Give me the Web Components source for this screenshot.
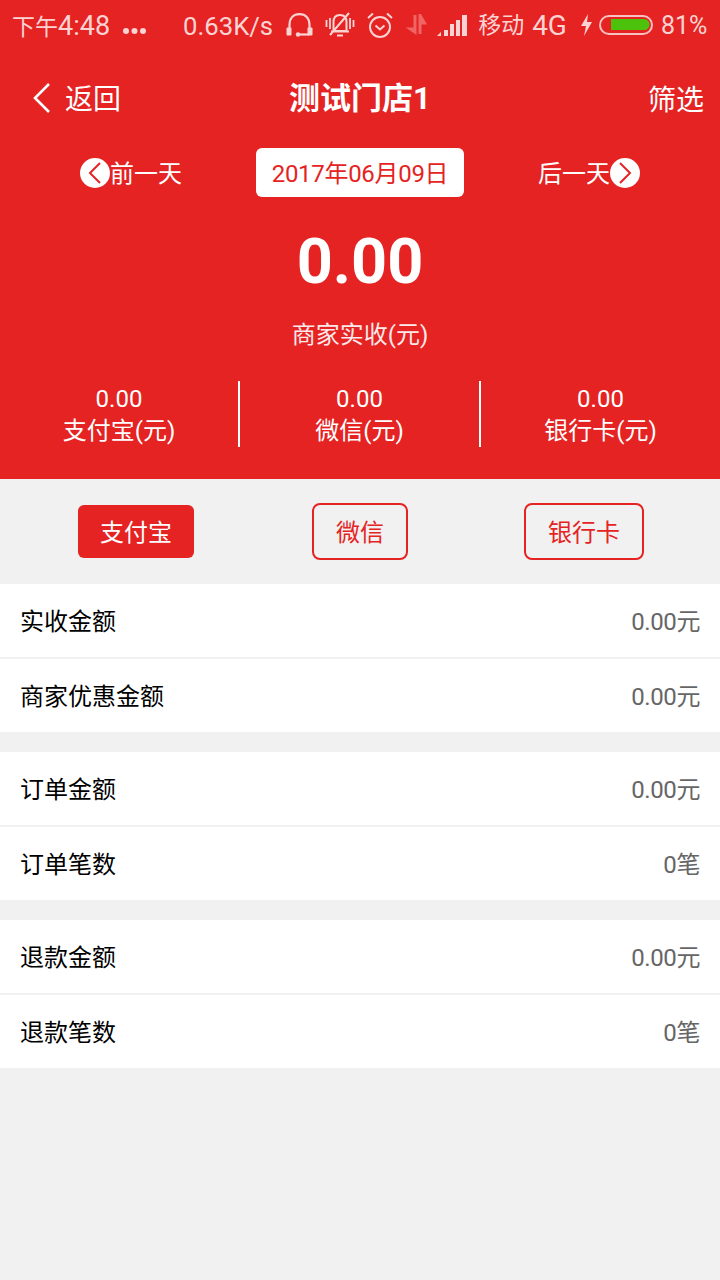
<!DOCTYPE html>
<html lang="zh">
<head>
<meta charset="utf-8">
<title>测试门店1</title>
<style>
  html, body { margin: 0; padding: 0; }
  body {
    width: 720px; height: 1280px; overflow: hidden;
    background: #f1f1f1;
    font-family: Roboto, "Noto Sans CJK SC", sans-serif;
  }
</style>
</head>
<body>
<store-report>
  <status-bar slot="top"></status-bar>
  <nav-bar slot="top" title="测试门店1"></nav-bar>
  <date-row slot="top" date="2017年06月09日"></date-row>
  <total-amount slot="top" value="0.00" label="商家实收(元)"></total-amount>
  <stat-row slot="top">
    <stat-cell value="0.00" label="支付宝(元)"></stat-cell>
    <stat-cell value="0.00" label="微信(元)"></stat-cell>
    <stat-cell value="0.00" label="银行卡(元)"></stat-cell>
  </stat-row>

  <pay-tabs>
    <pay-tab active>支付宝</pay-tab>
    <pay-tab style="margin-left:118px">微信</pay-tab>
    <pay-tab style="margin-left:116px">银行卡</pay-tab>
  </pay-tabs>

  <info-group>
    <info-row label="实收金额" value="0.00元"></info-row>
    <info-row label="商家优惠金额" value="0.00元"></info-row>
  </info-group>
  <info-group>
    <info-row label="订单金额" value="0.00元"></info-row>
    <info-row label="订单笔数" value="0笔"></info-row>
  </info-group>
  <info-group>
    <info-row label="退款金额" value="0.00元"></info-row>
    <info-row label="退款笔数" value="0笔"></info-row>
  </info-group>
</store-report>

<script>
// small helper, every element just sets its shadow html once
function shadowOf(el, html) {
  const shadow = el.attachShadow({ mode: 'open' });
  shadow.innerHTML = html;
  return shadow;
}

class StoreReport extends HTMLElement {
  constructor() {
    super();
    shadowOf(this, `
      <style>
        :host { display: block; }
        .head { background: #e52323; height: 479px; overflow: hidden; }
      </style>
      <div class="head"><slot name="top"></slot></div>
      <slot></slot>
    `);
  }
}

class StatusBar extends HTMLElement {
  constructor() {
    super();
    shadowOf(this, `
      <style>
        :host { display: flex; align-items: center; height: 50px; color: #fbd3d3; font-size: 26px; }
        .t { white-space: nowrap; line-height: 48px; padding-top: 2px; }
        .cn { font-size: 23px; }
        svg { display: block; flex: none; }
      </style>
      <span class="t" style="margin-left:12px;line-height:46px;padding-top:4px"><span class="cn">下午</span><span style="font-size:27px">4:48</span></span>
      <svg style="margin-left:12px;margin-top:12px" width="24" height="8" viewBox="0 0 24 8" fill="#fbd3d3"><circle cx="4" cy="4" r="3"/><circle cx="12.500" cy="4" r="3"/><circle cx="21" cy="4" r="3"/></svg>
      <span class="t" style="margin-left:37px;font-size:25.700px">0.63K/s</span>
      <!-- headset -->
      <svg style="margin-left:13px" width="27" height="24" viewBox="0 0 27 24" fill="none" stroke="#fbd3d3" stroke-width="2.200"><path d="M3.500 16V12C3.500 5 7.500 1.200 13.500 1.200S23.500 5 23.500 12V16"/><rect x="0.500" y="14.500" width="5" height="8" rx="1" fill="#fbd3d3" stroke="none"/><rect x="21.500" y="14.500" width="5" height="8" rx="1" fill="#fbd3d3" stroke="none"/><path d="M12 21.500H23"/><circle cx="12" cy="21.500" r="2.200" fill="#fbd3d3" stroke="none"/></svg>
      <!-- muted bell -->
      <svg style="margin-left:12px" width="30" height="26" viewBox="0 0 30 26" fill="none" stroke="#fbd3d3" stroke-width="2"><path d="M8.500 19V10C8.500 5.500 11 3 15 3S21.500 5.500 21.500 10V19ZM6 19.500H24M12 23.500H18M5 23L24 1"/><path d="M1.500 8V15M5 6V17M25 6V17M28.500 8V15" stroke-width="1.800"/></svg>
      <!-- alarm clock -->
      <svg style="margin-left:11px" width="28" height="27" viewBox="0 0 28 27" fill="none" stroke="#fbd3d3" stroke-width="2"><circle cx="14" cy="15" r="10"/><path d="M9.500 13.500L14 17.500L18.500 13.500M2 6L7 1.500M26 6L21 1.500"/></svg>
      <!-- data arrows -->
      <svg style="margin-left:11px" width="22" height="23" viewBox="0 0 22 23" fill="#f06464"><path d="M8.500 1H11.500V21L0.500 13.500H8.500ZM13.500 0H16L22 10.500H16.500V20H13.500Z"/></svg>
      <!-- signal -->
      <svg style="margin-left:10px" width="30" height="21" viewBox="0 0 30 21" fill="#fbd3d3"><path d="M0 21L4 17V21ZM7 15H11V21H7ZM13 9H17V21H13ZM19 5H23V21H19ZM25 0H30V21H25Z"/></svg>
      <span class="t cn" style="margin-left:11px">移动</span>
      <span class="t" style="margin-left:8px;font-size:28px">4G</span>
      <svg style="margin-left:13px" width="13" height="22" viewBox="0 0 13 22" fill="#fbd3d3"><path d="M8 0L1 12H6L4 22L12 8H7Z"/></svg>
      <svg style="margin-left:6px" width="54" height="20" viewBox="0 0 54 20"><rect x="1" y="1" width="52" height="18" rx="9" fill="none" stroke="#f9c0c0" stroke-width="2"/><path d="M12 4H45A5.500 5.500 0 0 1 45 15H12Z" fill="#4cc20d"/></svg>
      <span class="t" style="margin-left:8px;font-size:25px">81%</span>
    `);
  }
}

class NavBar extends HTMLElement {
  constructor() {
    super();
    shadowOf(this, `
      <style>
        :host { display: flex; align-items: center; justify-content: space-between; position: relative; height: 98px; padding: 0 16px 0 32px; color: #fff; font-size: 28px; }
        .back { display: flex; align-items: center; gap: 14px; }
        .back span { padding-bottom: 4px; }
        .filter { padding-bottom: 2px; }
        svg { display: block; margin-top: -2px; }
        h1 { position: absolute; left: 0; right: 0; top: 27px; margin: 0; text-align: center; font-size: 31px; line-height: 44px; font-weight: 700; pointer-events: none; }
      </style>
      <div class="back">
        <svg width="19" height="32" viewBox="0 0 19 32" fill="none" stroke="#fff" stroke-width="2.600"><path d="M17 2L3 16L17 30"/></svg>
        <span>返回</span>
      </div>
      <h1>${this.getAttribute('title')}</h1>
      <span class="filter">筛选</span>
    `);
  }
}

const DAY_ICON = d => `<svg width="30" height="30" viewBox="0 0 30 30"><circle cx="15" cy="15" r="15" fill="#fff"/><path d="${d}" fill="none" stroke="#e52323" stroke-width="2"/></svg>`;

class DateRow extends HTMLElement {
  constructor() {
    super();
    shadowOf(this, `
      <style>
        :host { display: grid; grid-template-columns: 1fr 208px 1fr; align-items: center; height: 49px; color: #fff; font-size: 24px; }
        .side { display: flex; align-items: center; }
        .side span { padding-bottom: 2px; }
        .prev { padding-left: 80px; }
        .next { padding-left: 74px; }
        svg { display: block; }
        .date { box-sizing: border-box; height: 49px; padding-top: 4px; line-height: 45px; background: #fff; border-radius: 6px; color: #e52323; text-align: center; white-space: nowrap; letter-spacing: -0.300px; }
      </style>
      <div class="side prev">${DAY_ICON('M20 5L10 15L20 25')}<span>前一天</span></div>
      <div class="date">${this.getAttribute('date')}</div>
      <div class="side next"><span>后一天</span>${DAY_ICON('M10 5L20 15L10 25')}</div>
    `);
  }
}

class TotalAmount extends HTMLElement {
  constructor() {
    super();
    shadowOf(this, `
      <style>
        :host { display: flex; flex-direction: column; align-items: center; padding-top: 25px; color: #fff; }
        .v { font-size: 63px; font-weight: 700; line-height: 80px; }
        .l { margin-top: 13px; font-size: 24px; line-height: 40px; color: #fde9e9; }
      </style>
      <div class="v">${this.getAttribute('value')}</div>
      <div class="l">${this.getAttribute('label')}</div>
    `);
  }
}

class StatRow extends HTMLElement {
  constructor() {
    super();
    shadowOf(this, `
      <style>
        :host { display: grid; grid-template-columns: 240px 241px 239px; margin-top: 26px; }
      </style>
      <slot></slot>
    `);
  }
}

class StatCell extends HTMLElement {
  constructor() {
    super();
    shadowOf(this, `
      <style>
        :host { display: block; height: 66px; box-sizing: border-box; border-right: 2px solid #fff; color: #fff; text-align: center; font-size: 24px; }
        :host(:last-child) { border-right: 0; }
        .v { padding-top: 2px; line-height: 33px; }
        .l { line-height: 31px; }
      </style>
      <div class="v">${this.getAttribute('value')}</div>
      <div class="l">${this.getAttribute('label')}</div>
    `);
  }
}

class PayTabs extends HTMLElement {
  constructor() {
    super();
    shadowOf(this, `
      <style>
        :host { display: flex; align-items: center; height: 105px; padding-left: 78px; }
      </style>
      <slot></slot>
    `);
  }
}

class PayTab extends HTMLElement {
  constructor() {
    super();
    shadowOf(this, `
      <style>
        :host { display: block; box-sizing: border-box; height: 57px; line-height: 57px; padding: 0 22px; border: 2px solid #e52323; border-radius: 8px; color: #e52323; font-size: 24px; }
        :host([active]) { height: 53px; line-height: 57px; border: 0; padding: 0 22px; background: #e52323; color: #fff; border-radius: 6px; }
      </style>
      <slot></slot>
    `);
  }
}

class InfoGroup extends HTMLElement {
  constructor() {
    super();
    shadowOf(this, `
      <style>
        :host { display: block; margin-bottom: 20px; background: #fff; }
        ::slotted(:first-child) { border-bottom: 2px solid #f1f1f1; }
      </style>
      <slot></slot>
    `);
  }
}

class InfoRow extends HTMLElement {
  constructor() {
    super();
    shadowOf(this, `
      <style>
        :host { display: flex; align-items: center; justify-content: space-between; height: 71px; padding: 0 20px 2px; font-size: 24px; }
        .l { color: #000; }
        .v { color: #666; letter-spacing: -0.400px; }
      </style>
      <span class="l">${this.getAttribute('label')}</span>
      <span class="v">${this.getAttribute('value')}</span>
    `);
  }
}

customElements.define('store-report', StoreReport);
customElements.define('status-bar', StatusBar);
customElements.define('nav-bar', NavBar);
customElements.define('date-row', DateRow);
customElements.define('total-amount', TotalAmount);
customElements.define('stat-row', StatRow);
customElements.define('stat-cell', StatCell);
customElements.define('pay-tabs', PayTabs);
customElements.define('pay-tab', PayTab);
customElements.define('info-group', InfoGroup);
customElements.define('info-row', InfoRow);
</script>
</body>
</html>
